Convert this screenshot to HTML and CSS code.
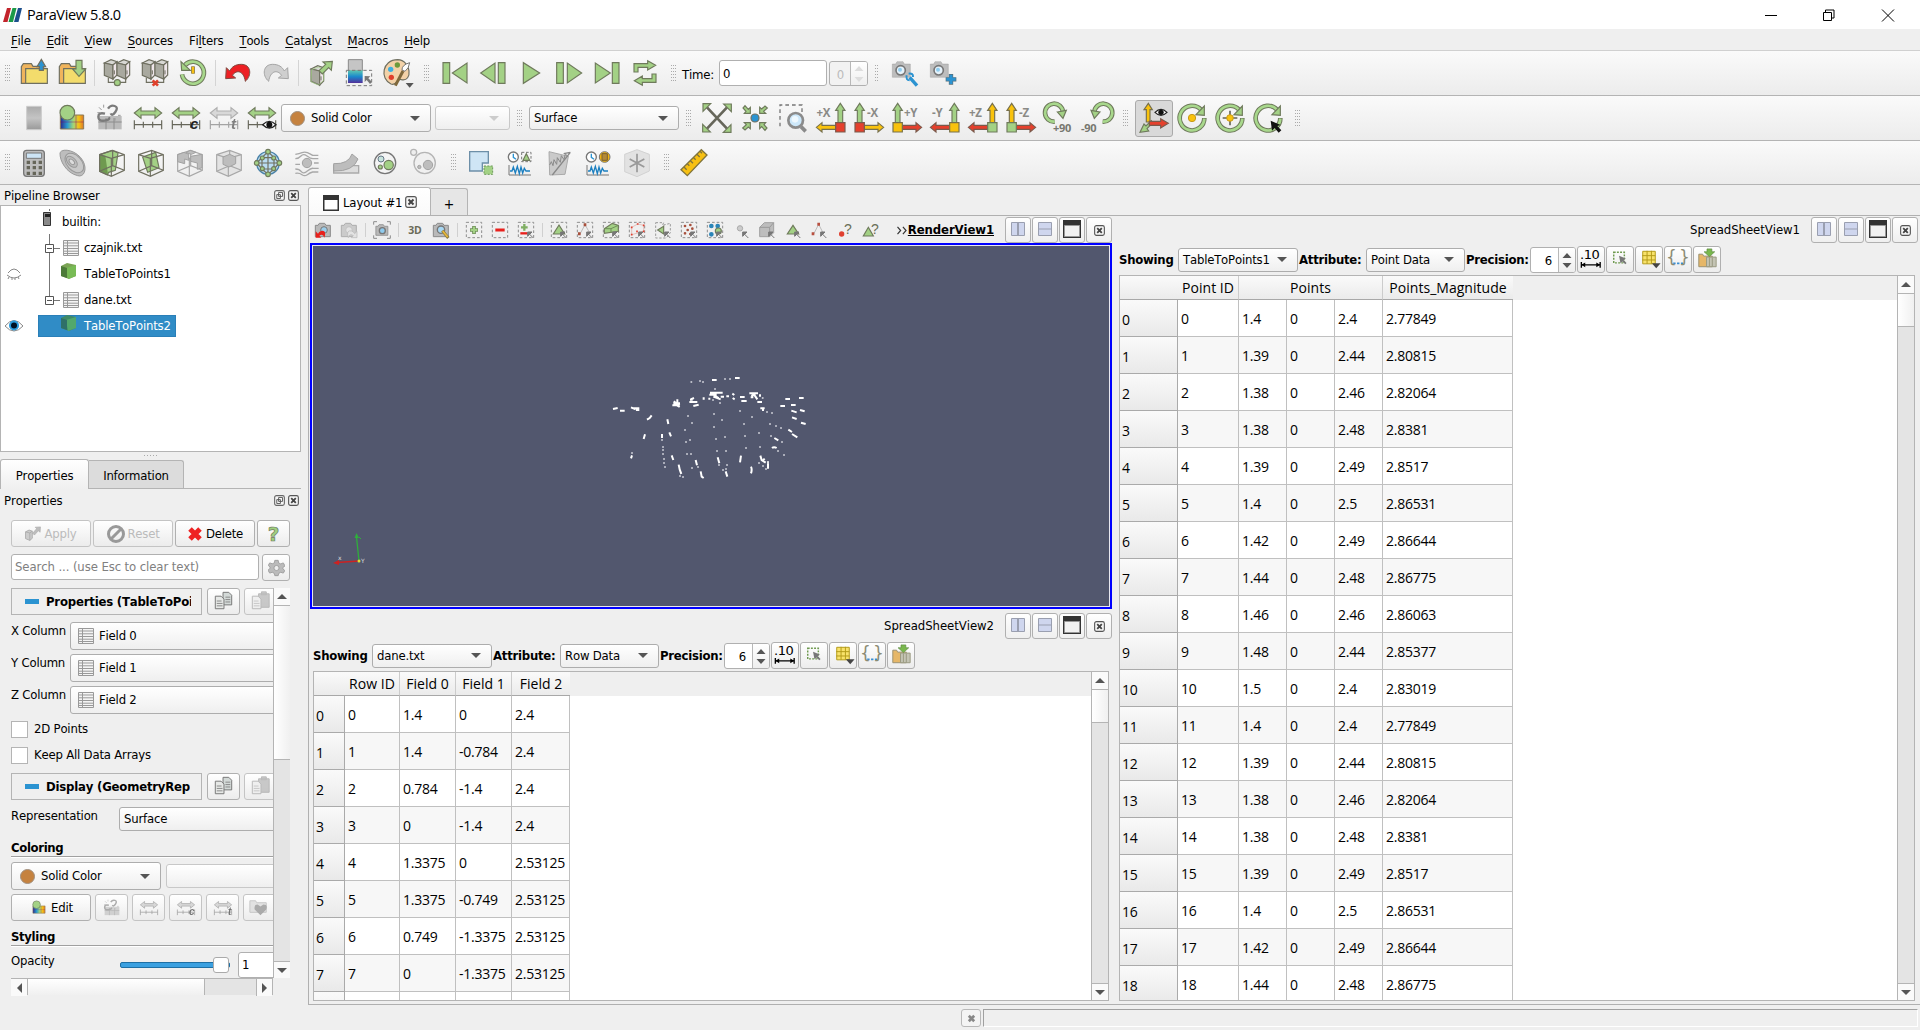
FILE: index.html
```html
<!DOCTYPE html>
<html lang="en">
<head>
<meta charset="utf-8">
<title>ParaView 5.8.0</title>
<link rel="stylesheet" href="styles.css">
</head>
<body>
<svg class="sprite" aria-hidden="true">
<defs>
<linearGradient id="rain"><stop offset="0" stop-color="#2a2a8c"/><stop offset=".3" stop-color="#2a9bd0"/><stop offset=".55" stop-color="#9fd47c"/><stop offset=".8" stop-color="#f7c012"/><stop offset="1" stop-color="#d9742a"/></linearGradient>
<linearGradient id="cool" x2="0" y2="1"><stop offset="0" stop-color="#5ec8b0"/><stop offset=".5" stop-color="#1a88cc"/><stop offset="1" stop-color="#54309a"/></linearGradient>
<linearGradient id="gray" x2="0" y2="1"><stop offset="0" stop-color="#aaa"/><stop offset=".5" stop-color="#c4c4c4"/><stop offset="1" stop-color="#999"/></linearGradient>
<g id="box"><path fill="#d8d8d4" d="M-38-30-18-40 0-34-12-24z"/><path fill="#a9a99f" d="M-38-30-12-24V18L-38 7z"/><path fill="#efe6ea" d="M-12-24 0-34V6L-12 18z"/><path d="M-8-8v12" stroke-width="3"/></g>
<g id="folder"><path fill="#f0b45c" d="M-38 31v-50l6-9h24l5 8h32v51z"/><path fill="#f3dc6c" d="M-25-13h65v44h-65z"/></g>
<polygon id="ar-up" points="0,-44 14,-23 7,-23 7,14 -7,14 -7,-23 -14,-23"/>
<polygon id="ar-l" points="-44,28 -27,14 -27,22 14,22 14,34 -27,34 -27,42"/>
<path id="sq" d="M14 14h28v28H14z"/>
<polygon id="dbl" points="-41,-15 -21,-31 -21,-21 21,-21 21,-31 41,-15 21,1 21,-9 -21,-9 -21,1"/>
<path id="rule" fill="none" stroke="#66665a" d="M-41 7v27M-14 11v18M14 11v18M41 7v27M-41 20h82"/>
<g id="cam"><path fill="#bdbdbd" stroke="#8a8a8a" d="M-38-27h10l4-7h18l4 7h18v40h-54z"/><circle cx="-13" cy="-8" r="14" fill="#e6f2fa" stroke="#777" stroke-width="5"/><circle cx="-15" cy="-10" r="6" fill="#8fcdf0" stroke="none"/></g>
<path id="eye" d="M-20 0Q0-20 20 0 0 20-20 0z" fill="#fff" stroke="#222"/>
<g id="cube"><path d="M-37-25 2-38 37-25V22L-2 40-37 25zM-37-25-2-14 37-25M-2-14V40M2-38V8M-37 25 2 8 37 22" fill="none"/></g>
<g id="dashsq"><path d="M-23-23h46v46h-46z" fill="none" stroke="#8c8c8c" stroke-width="3" stroke-dasharray="8 6"/></g>
<path id="cur" d="M22 24 8 10M5 19V6h13z" stroke="#777" stroke-width="3" fill="#777"/>
<path id="scam" d="M-23-14h8l4-6h16l4 6h13v34h-45z" fill="#b9b9b9" stroke="#8b8b8b" stroke-width="3"/>
</defs>
<symbol id="i-open" viewBox="-57 -66 114 132"><use href="#folder" class="ln"/><path class="ln" fill="#2b93d1" d="M22-41 35-19H28V-8H16V-19H9z"/></symbol>
<symbol id="i-save" viewBox="-57 -66 114 132"><use href="#folder" class="ln"/><path class="g" d="M12-38H30v26H41L21 10 2-12h10z"/></symbol>
<symbol id="i-conn" viewBox="-57 -66 114 132"><g class="ln"><use href="#box"/><use href="#box" x="38"/><path fill="none" d="M-26 15v13h52V15"/><circle class="g" cx="1" cy="29" r="9"/></g></symbol>
<symbol id="i-disc" viewBox="-57 -66 114 132"><g class="ln"><use href="#box"/><use href="#box" x="38"/><path fill="none" d="M-26 15v13h52V15"/></g><path d="M-7 22 9 38M9 22-7 38" stroke="#e0402c" stroke-width="8"/></symbol>
<symbol id="i-hist" viewBox="-57 -66 114 132"><path class="o" d="M-24-24A33 33 0 1 1-33 4"/><path class="i" d="M-24-24A33 33 0 1 1-33 4"/><path class="g" d="M-36-34-8-8-34-8z"/><path d="M0-20v22" stroke="#8c7430" stroke-width="11"/><path d="M0-18v19" stroke="#f7c012" stroke-width="6"/></symbol>
<symbol id="i-undo" viewBox="-57 -66 114 132"><path d="M-35-16-37 17-7 15-17 7C-3-12 17-6 22 25 43 7 39-26 10-26-8-26-19-18-25-6z" fill="#ed2024" stroke="#7e4a40" stroke-width="3"/></symbol>
<symbol id="i-redo" viewBox="-57 -66 114 132"><path transform="scale(-1 1)" d="M-35-16-37 17-7 15-17 7C-3-12 17-6 22 25 43 7 39-26 10-26-8-26-19-18-25-6z" fill="#cfcfcf" stroke="#a5a5a5" stroke-width="3"/></symbol>
<symbol id="i-extr" viewBox="-57 -66 114 132"><g class="ln" transform="translate(8 18)"><use href="#box"/></g><path d="M-28-10-8-18 8-12V22L-8 36-30 26z" fill="none" stroke="#a3d185" stroke-width="2"/><path class="g" d="M34-35 31-8 23-16 4 3-6-7 14-26 6-33z"/></symbol>
<symbol id="i-selc" viewBox="-57 -66 114 132"><path fill="#c5c5c5" stroke="#8a8a8a" stroke-width="3" d="M-32-40h42v34h-42z"/><path fill="url(#cool)" d="M-33-8h44v38h-44z"/><path d="M-38-8h76v46h-76z" fill="none" stroke="#777" stroke-width="3" stroke-dasharray="10 7"/><path d="M17 9v18l6-6 10 12 6-6-11-11 6-6z" fill="#777"/></symbol>
<symbol id="i-pal" viewBox="-57 -66 114 132"><path class="ln" fill="#f3d2a8" d="M2-40C-45-40-52 18-18 33 2 40-2 14 13 20 48 28 43-38 2-40z"/><circle cx="1" cy="-24" r="8" fill="#6c9a3c"/><circle cx="-19" cy="-11" r="8" fill="#3db0e0"/><circle cx="-17" cy="13" r="8" fill="#e0402c"/><path d="M38-31Q14-24 15-9L24-5Q36-14 38-31z" fill="#fff" stroke="#777" stroke-width="3"/><path d="M18-6-5 38" stroke="#80693c" stroke-width="9"/><path d="M26 30h24L38 44z" fill="#555"/></symbol>
<symbol id="i-first" viewBox="-57 -66 114 132"><path class="g" d="M-36-31h20v62h-20zM36-30v60L-8 0z"/></symbol>
<symbol id="i-prev" viewBox="-57 -66 114 132"><path class="g" d="M36-31H16v62h20zM6-30v60L-37 0z"/></symbol>
<symbol id="i-play" viewBox="-57 -66 114 132"><path class="g" d="M-23-31v62L26 0z"/></symbol>
<symbol id="i-next" viewBox="-57 -66 114 132"><path class="g" d="M-37-31h20v62h-20zM-5-30v60L38 0z"/></symbol>
<symbol id="i-last" viewBox="-57 -66 114 132"><path class="g" d="M36-31H16v62h20zM-35-30v60L10 0z"/></symbol>
<symbol id="i-loop" viewBox="-57 -66 114 132"><path class="g" id="lp" d="M-33-3v-25H8v-9l24 14L8-9v-8h-29v14z"/><use href="#lp" transform="rotate(180)"/></symbol>
<symbol id="i-camw" viewBox="-57 -66 114 132"><use href="#cam"/><path d="M14 13 36 38" stroke="#2b93d1" stroke-width="10"/><path d="M5 7q-3 14 9 15M11 2q14-2 13 10" fill="none" stroke="#2b93d1" stroke-width="6"/></symbol>
<symbol id="i-camp" viewBox="-57 -66 114 132"><use href="#cam"/><path d="M24 3v32M8 19h32" stroke="#56707c" stroke-width="13"/><path d="M24 5v28M10 19h28" stroke="#2b93d1" stroke-width="9"/></symbol>

<symbol id="i-bar" viewBox="-57 -66 114 132"><path fill="url(#gray)" stroke="#ccc" stroke-width="3" d="M-22-35h44v70h-44z"/></symbol>
<symbol id="i-cmap" viewBox="-57 -66 114 132"><path fill="url(#rain)" stroke="#8a7a55" stroke-width="3" d="M-35-9h70v42h-70z"/><path d="M-35 12h70M12-8v40" stroke="#806" stroke-opacity=".4" stroke-width="3"/><circle class="g" cx="-14" cy="-16" r="22"/></symbol>
<symbol id="i-unlk" viewBox="-57 -66 114 132"><path fill="#bbb" d="M-35-6h70v40h-70z"/><path d="M-35 12h70M-12 0v34M12 0v34" stroke="#8c8c8c" stroke-width="3"/><g fill="none" stroke="#7b7b7b" stroke-width="7"><path d="M-15-13q-20-5-20 9t18 12 14-10M-6-28q8-12 20-8t2 18-14 4"/></g><path d="M-33-32l8 8M-19-40v9M-38-16h10M15 0v8M24-8h8" stroke="#999" stroke-width="3"/></symbol>
<symbol id="i-rng" viewBox="-57 -66 114 132"><use href="#dbl" class="g"/><use href="#rule" class="ln"/></symbol>
<symbol id="i-rnge" viewBox="-57 -66 114 132"><use href="#dbl" class="g"/><use href="#rule" class="ln"/><g transform="translate(22 20)"><use href="#eye" stroke-width="4"/><circle r="9" fill="#111"/></g></symbol>
<symbol id="i-reset" viewBox="-57 -66 114 132"><path d="M-30-32 30 32M30-32-30 32" stroke="#66665a" stroke-width="8"/><g class="g"><path id="cr" d="M-42-43h23L-42-20z"/><use href="#cr" transform="rotate(90)"/><use href="#cr" transform="rotate(180)"/><use href="#cr" transform="rotate(270)"/></g></symbol>
<symbol id="i-zdat" viewBox="-57 -66 114 132"><g class="g"><path id="ci" d="M-14-14h-18l5-6-9-10 6-7 10 11 6-6z"/><use href="#ci" transform="rotate(90)"/><use href="#ci" transform="rotate(180)"/><use href="#ci" transform="rotate(270)"/></g><circle class="ln" r="12" fill="#2b93d1"/></symbol>
<symbol id="i-zbox" viewBox="-57 -66 114 132"><path d="M-39 25v-64h66v22" fill="none" stroke="#777" stroke-width="4" stroke-dasharray="11 9"/><path d="M24 26 38 40" stroke="#8a8a8a" stroke-width="11"/><circle cx="8" cy="7" r="22" fill="#cde8fa" stroke="#8b8b8b" stroke-width="8"/><circle cx="6" cy="4" r="10" fill="#eef8fe"/></symbol>
<symbol id="i-px" viewBox="-57 -66 114 132"><use href="#ar-up" x="28" class="g"/><use href="#ar-l" class="y"/><use href="#sq" class="r"/></symbol>
<symbol id="i-nx" viewBox="-57 -66 114 132"><g transform="scale(-1 1)"><use href="#ar-up" x="28" class="g"/><use href="#ar-l" class="y"/><use href="#sq" class="r"/></g></symbol>
<symbol id="i-py" viewBox="-57 -66 114 132"><g transform="scale(-1 1)"><use href="#ar-up" x="28" class="g"/><use href="#ar-l" class="r"/><use href="#sq" class="y"/></g></symbol>
<symbol id="i-ny" viewBox="-57 -66 114 132"><use href="#ar-up" x="28" class="g"/><use href="#ar-l" class="r"/><use href="#sq" class="y"/></symbol>
<symbol id="i-pz" viewBox="-57 -66 114 132"><use href="#ar-up" x="28" class="y"/><use href="#ar-l" class="r"/><use href="#sq" class="g"/></symbol>
<symbol id="i-nz" viewBox="-57 -66 114 132"><g transform="scale(-1 1)"><use href="#ar-up" x="28" class="y"/><use href="#ar-l" class="r"/><use href="#sq" class="g"/></g></symbol>
<symbol id="i-r90" viewBox="-57 -66 114 132"><g id="r90"><path class="o" d="M-13 11A27 27 0 1 1 12-18"/><path class="i" d="M-13 11A27 27 0 1 1 12-18"/><path class="g" d="M-5-18l27-5L12 1z"/></g></symbol>
<symbol id="i-l90" viewBox="-57 -66 114 132"><use href="#r90" transform="translate(4 0) scale(-1 1)"/></symbol>
<symbol id="i-oaxes" viewBox="-57 -66 114 132"><path class="g" d="M-8 8-24 24-30 18-42 43-16 39-21 32-4 15z"/><path class="y" d="M-17-44-5-25h-7V12h-11V-25h-7z"/><path class="r" d="M-14 10h34V2L43 16 20 30V22H-14z"/><g transform="translate(21 -17) scale(.9)"><use href="#eye" stroke-width="4"/><circle r="9" fill="#111"/></g></symbol>
<symbol id="i-rot" viewBox="-57 -66 114 132"><g id="rot"><path class="o" d="M27-25A37 37 0 1 0 37 0"/><path class="i" d="M27-25A37 37 0 1 0 37 2"/><path class="g" d="M12-10 37-36V-8z"/></g></symbol>
<symbol id="i-show" viewBox="-57 -66 114 132"><use href="#rot"/><circle r="11" fill="#f9c20d" stroke="#c59a1c" stroke-width="3"/></symbol>
<symbol id="i-resc" viewBox="-57 -66 114 132"><use href="#rot"/><path d="M0-22V22M-22 0H22" stroke="#66665a" stroke-width="5"/><circle r="10" fill="#f9c20d" stroke="#c59a1c" stroke-width="3"/></symbol>
<symbol id="i-pick" viewBox="-57 -66 114 132"><use href="#rot"/><path d="M8 8l4 30 8-8 12 14 8-7-12-13 10-3z" fill="#111"/></symbol>

<symbol id="i-calc" viewBox="-57 -66 114 132"><rect x="-31" y="-38" width="62" height="78" rx="9" fill="#bdbdbd" stroke="#777" stroke-width="4"/><path d="M-23-30h46v16h-46z" fill="#cde4f5" stroke="#777" stroke-width="3"/><g stroke="#66665a" stroke-width="10" stroke-dasharray="10 8"><path d="M-22-2h50M-22 14h50M-22 31h50"/></g></symbol>
<symbol id="i-cont" viewBox="-57 -66 114 132"><g fill="#bdbdbd" stroke="#999" stroke-width="3"><path d="M-39-30C-35-46 12-40 30-6 44 20 32 44 14 38-20 30-40-6-39-30z"/><ellipse rx="34" ry="22" transform="translate(4 0)rotate(48)" fill="#c9c9c9"/><ellipse cx="-5" cy="0" rx="20" ry="12" transform="rotate(45)"/><ellipse cx="-5" cy="0" rx="10" ry="6" transform="rotate(45)" fill="#ddd"/></g></symbol>
<symbol id="i-clip" viewBox="-57 -66 114 132"><path class="g" d="M-37-25 0-38 18-30 10 22-10 28-14 36-37 25z"/><path d="M-37-25-20-22-12 34-37 25z" fill="#6f9a50"/><use href="#cube" class="ln"/></symbol>
<symbol id="i-slic" viewBox="-57 -66 114 132"><path class="g" d="M-25-18 14-32 24 14-10 28z"/><use href="#cube" class="ln"/></symbol>
<symbol id="i-thr" viewBox="-57 -66 114 132"><use href="#cube" class="lg"/><path class="gf" d="M-37-25-18-32-4-26-4-8-16-12-16 2-37-4zM2-20l34-6v40l-14 5V0L2-5zM0-38l18 6-14 6-16-5z"/></symbol>
<symbol id="i-sub" viewBox="-57 -66 114 132"><path d="M-37-25 2-38 37-25V22L-2 40-37 25z" fill="#e3e3e3"/><use href="#cube" class="lg"/><path class="gf" d="M-18-18 2-26 20-18V2L0 12-18 4z"/></symbol>
<symbol id="i-glyph" viewBox="-57 -66 114 132"><circle r="34" fill="#b9dcf2" stroke="#4a82a8" stroke-width="4"/><path class="ln" fill="none" d="M-34 0H34M0-34V34M-18-16H18V18H-18zM-34 0-18-16 0-34 18-16 34 0 18 18 0 34-18 18z"/><g class="g"><circle cy="-34" r="7"/><circle cy="34" r="7"/><circle cx="-34" r="7"/><circle cx="34" r="7"/><circle cx="-17" cy="-15" r="6"/><circle cx="17" cy="-15" r="6"/><circle cx="-17" cy="17" r="6"/><circle cx="17" cy="17" r="6"/></g></symbol>
<symbol id="i-strm" viewBox="-57 -66 114 132"><g fill="none" stroke="#a8a8a8" stroke-width="4"><path d="M-35-26q12-2 20-5t16 0 16 8h17M-35-13q10 0 17-8t18 0 18 8h16M-35 4h14M21 0h14M-35 18q12 0 18 8t18-2 18-8h16M-35 31q12-2 20 4t16 0 16-8h17"/></g><circle class="gf" r="14"/></symbol>
<symbol id="i-warp" viewBox="-57 -66 114 132"><path d="M-37 8h75v22h-75z" fill="#ddd" stroke="#aaa" stroke-width="4"/><path class="gf" d="M-37 2Q8 4 18-27L36-12Q22 26-37 24z"/></symbol>
<symbol id="i-grp" viewBox="-57 -66 114 132"><circle r="32" fill="#f4f4f4" stroke="#777" stroke-width="4"/><circle class="g" cx="11" cy="6" r="14"/><circle cx="-12" cy="-12" r="9" fill="#c8e4dc" stroke="#678"  stroke-width="3"/><circle class="g" cx="-14" cy="12" r="6"/></symbol>
<symbol id="i-xtr" viewBox="-57 -66 114 132"><circle cx="2" r="32" fill="#f0f0f0" stroke="#b5b5b5" stroke-width="4"/><circle class="gf" cx="12" cy="6" r="14"/><circle class="gf" cx="-14" cy="12" r="5"/><circle cx="-31" cy="-32" r="9" fill="#eee" stroke="#b5b5b5" stroke-width="4"/></symbol>
<symbol id="i-exsel" viewBox="-57 -66 114 132"><path d="M-34-34h56v34H4v24h-38z" fill="#cfe5f5" stroke="#6d8fa8" stroke-width="4"/><path d="M9 9h26v25H9z" fill="#a3d185" stroke="#6c9a5a" stroke-width="3" stroke-dasharray="6 4"/></symbol>
<symbol id="i-ptime" viewBox="-57 -66 114 132"><circle cx="-20" cy="-18" r="15" fill="#fff" stroke="#777" stroke-width="4"/><path d="M-20-28v11l8 6" fill="none" stroke="#2b93d1" stroke-width="4"/><path d="M5-32h28v28H5z" fill="none" stroke="#777" stroke-width="3" stroke-dasharray="8 5"/><path class="g" d="M19-28 29-8H9z"/><path id="wave" d="M-33 6v30h66" fill="none" stroke="#777" stroke-width="3"/><path id="wv" d="M-30 24h6l4-12 6 18 6-20 6 22 5-20 5 18 5-14 5 8h12" fill="none" stroke="#1b7fc0" stroke-width="4"/></symbol>
<symbol id="i-line" viewBox="-57 -66 114 132"><path d="M-30-34 28-20 18 34-28 36z" fill="#cacaca" stroke="#aaa" stroke-width="3"/><path d="M-20 36 34-32M34-32 14-28" stroke="#888" stroke-width="4"/><path d="M-28 6l5-10 5 12 3-18 8 14 2-20 9 14 3-20 8 12 4-18 8 10" fill="none" stroke="#8a8a8a" stroke-width="3"/></symbol>
<symbol id="i-gtime" viewBox="-57 -66 114 132"><circle cx="-20" cy="-18" r="15" fill="#fff" stroke="#777" stroke-width="4"/><path d="M-20-28v11l8 6" fill="none" stroke="#2b93d1" stroke-width="4"/><circle cx="20" cy="-18" r="16" fill="#f2b40e" stroke="#777" stroke-width="3"/><path d="M12-28h16v20H12z" fill="#b28a3a" stroke="#7a6030" stroke-width="3"/><use href="#wave"/><use href="#wv"/></symbol>
<symbol id="i-prog" viewBox="-57 -66 114 132"><path d="M-37-26 0-40 37-26V24L0 41-37 26z" fill="#e2e2e2" stroke="#d2d2d2" stroke-width="3"/><path d="M0-28V28M-22-12 22 12M22-12-22 12" stroke="#999" stroke-width="5"/></symbol>
<symbol id="i-ruler" viewBox="-57 -66 114 132"><path d="M-39 20 22-40 39-24-20 38z" fill="#f7c012" stroke="#80743c" stroke-width="4"/><path d="M-30 12l8 8M-20 2l6 6M-11-7l8 8M-1-16l6 6M9-26l8 8M18-35l6 6" stroke="#80743c" stroke-width="4"/></symbol>

<symbol id="v-undo" viewBox="-39 -39 78 78"><use href="#scam"/><circle cx="3" cy="0" r="10" fill="#9bcdea" stroke="#777" stroke-width="3"/><path d="M-22 4v19h17l-6-6q11-8 15 6 8-24-10-20-6 2-9 8z" fill="#e8201c"/></symbol>
<symbol id="v-redo" viewBox="-39 -39 78 78"><g opacity=".65"><use href="#scam"/><circle r="10" fill="#ddd" stroke="#aaa" stroke-width="3"/><path d="M24 4v19H7l6-6Q2 9-2 23-10-1 8 3q6 2 9 8z" fill="#ddd" stroke="#999" stroke-width="2"/></g></symbol>
<symbol id="v-shot" viewBox="-39 -39 78 78"><use href="#scam" transform="scale(.8)"/><circle cx="1" cy="2" r="9" fill="#8fcbee" stroke="#777" stroke-width="4"/><path d="M-25-16v-9h10M15-25h10v9M25 16v9H15M-15 25h-10v-9" fill="none" stroke="#8c8c8c" stroke-width="3"/></symbol>
<symbol id="v-cam" viewBox="-39 -39 78 78"><use href="#scam"/><circle r="11" cy="-1" fill="#a8d8f4" stroke="#777" stroke-width="4"/><path d="M4 2 22 24" stroke="#8a7a3c" stroke-width="9"/><path d="M5 3 20 21" stroke="#e9b83a" stroke-width="5"/></symbol>
<symbol id="v-add" viewBox="-39 -39 78 78"><use href="#dashsq"/><path d="M0-12V12M-12 0H12" stroke="#6f8f58" stroke-width="11"/><path d="M0-10V10M-10 0H10" stroke="#a3d185" stroke-width="6"/></symbol>
<symbol id="v-sub" viewBox="-39 -39 78 78"><use href="#dashsq"/><path d="M-14 0H14" stroke="#e8201c" stroke-width="9"/></symbol>
<symbol id="v-tog" viewBox="-39 -39 78 78"><use href="#dashsq"/><path d="M-5-18V2M-15-8H5" stroke="#7fae62" stroke-width="7"/><path d="M-17 10H7" stroke="#e8201c" stroke-width="7"/><use href="#cur"/></symbol>
<symbol id="v-tri" viewBox="-39 -39 78 78"><use href="#dashsq"/><path class="g" d="M0-15 17 12H-17z"/><use href="#cur"/></symbol>
<symbol id="v-pts" viewBox="-39 -39 78 78"><use href="#dashsq"/><path d="M0-16-15 12M0-16 16 12" stroke="#bbb" stroke-width="3"/><path d="M0-20v9M-17 7v9" stroke="#a8503c" stroke-width="8"/><use href="#cur"/></symbol>
<symbol id="v-fru" viewBox="-39 -39 78 78"><use href="#dashsq"/><path class="g" d="M-20-4 4-20 22-14V4L-20 10z"/><path d="M-20-4 0-4 22-14M0-4V8" fill="none" stroke="#6f8f58" stroke-width="3"/><use href="#cur"/></symbol>
<symbol id="v-frp" viewBox="-39 -39 78 78"><use href="#dashsq"/><path d="M-16-8 2-18 20-14V4L-16 14z" fill="none" stroke="#e0a8a0" stroke-width="2"/><path d="M-16-8h.1M2-18h.1M20-14h.1M20 4h.1M-16 14h.1M0 4h.1" stroke="#e04030" stroke-width="5" stroke-linecap="square"/><use href="#cur"/></symbol>
<symbol id="v-poly" viewBox="-39 -39 78 78"><path d="M-22-22h24l-4 8 24-6v28l-12 16h-32z" fill="none" stroke="#999" stroke-width="3" stroke-dasharray="7 5"/><path class="g" d="M-16 0 2-11V12z"/><use href="#cur"/></symbol>
<symbol id="v-ppt" viewBox="-39 -39 78 78"><use href="#dashsq"/><path d="M-12-12h.1M4-15h.1M-4 0h.1M10-4h.1M-12 10h.1M4 12h.1" stroke="#a8503c" stroke-width="8" stroke-linecap="round"/><use href="#cur"/></symbol>
<symbol id="v-blk" viewBox="-39 -39 78 78"><use href="#dashsq"/><path d="M-11-12h.1M-11 13h.1M8-12h.1" stroke="#2a85b8" stroke-width="14" stroke-linecap="round"/><circle class="g" cx="10" cy="3" r="9"/><use href="#cur"/></symbol>
<symbol id="v-ipt" viewBox="-39 -39 78 78"><circle cx="-3" cy="-5" r="8" fill="#ccc" stroke="#aaa" stroke-width="3"/><use href="#cur"/></symbol>
<symbol id="v-icb" viewBox="-39 -39 78 78"><path class="gf" d="M-22-8-8-22H20V8L8 20H-22z"/><path d="M-22-8H8V20M8-8 20-22" fill="none" stroke="#999" stroke-width="3"/><use href="#cur"/></symbol>
<symbol id="v-itr" viewBox="-39 -39 78 78"><path class="g" d="M0-14 17 12H-17z"/><use href="#cur"/></symbol>
<symbol id="v-ivt" viewBox="-39 -39 78 78"><path d="M-1-17-16 12M-1-17 14 12" stroke="#bbb" stroke-width="3"/><path d="M-1-22v9M-18 7v9" stroke="#b85040" stroke-width="8"/><use href="#cur"/></symbol>
<symbol id="v-qpt" viewBox="-39 -39 78 78"><circle cx="-10" cy="12" r="8" fill="#e04030"/></symbol>
<symbol id="v-qtr" viewBox="-39 -39 78 78"><path class="g" d="M-8-8 7 18H-23z"/></symbol>

<symbol id="s-h" viewBox="0 0 26 26"><path d="M6.500 5.500h13v13h-13zM12.500 5v14M13.500 5v14" fill="#cfd6ee" stroke="#9a9fb0"/></symbol>
<symbol id="s-v" viewBox="0 0 26 26"><path d="M6.500 5.500h13v13h-13zM6 12h14" fill="#cfd6ee" stroke="#9a9fb0"/></symbol>
<symbol id="s-max" viewBox="0 0 26 26"><path d="M4 3h18v18H4z" fill="#333"/><path d="M5.500 8.500h15v11h-15z" fill="#f2f2f2" stroke="#999"/></symbol>
<symbol id="s-x" viewBox="0 0 12 12"><rect x=".7" y=".7" width="10.600" height="10.600" rx="2" fill="#f5f5f5" stroke="#555" stroke-width="1.200"/><path d="M3.500 3.500l5 5M8.500 3.500l-5 5" stroke="#444" stroke-width="2"/></symbol>
<symbol id="s-fl" viewBox="0 0 12 12"><rect x=".7" y=".7" width="10.600" height="10.600" rx="2" fill="#f5f5f5" stroke="#666" stroke-width="1.200"/><path d="M5 2.700h4.300V7H5zM3 5h4v4.300H3z" fill="none" stroke="#555"/></symbol>
<symbol id="s-grid" viewBox="0 0 16 16"><path d="M.5.5h15v15H.5z" fill="#f4f4f4" stroke="#999"/><path d="M1 3h14M1 5.800h14M1 8.500h14M1 11.200h14M1 13.500h14M4.500 1v14" stroke="#999"/></symbol>
<symbol id="s-cube" viewBox="0 0 16 16"><path d="M0 3 6 0l9 2v11l-7 3-8-3z" fill="#7ba455"/><path d="M5 5l10-3v11l-8 3z" fill="#78bb55"/><path d="M0 3l6 2v10l-6-2z" fill="#4c7a38"/></symbol>
<symbol id="s-cube2" viewBox="0 0 16 16"><path d="M0 3 6 0l9 2v11l-7 3-8-3z" fill="#3f8a68"/><path d="M5 5l10-3v11l-8 3z" fill="#52a86c"/><path d="M0 3l6 2v10l-6-2z" fill="#2f7068"/></symbol>
<symbol id="s-dec" viewBox="0 0 28 28"><path d="M4 16.500v6M23.500 16.500v6M4 19.500h20" stroke="#000" stroke-width="1.400"/><path d="M4 19.500l4-2.500v5zM23.500 19.500l-4-2.500v5z"/></symbol>
<symbol id="s-sel" viewBox="0 0 28 28"><path d="M7.500 6.500h11v11h-11z" fill="none" stroke="#6f9a50" stroke-width="1.500" stroke-dasharray="2 1.300"/><path d="M13 10l1.500 8 2-2 3 3 1.300-1.300-3-3 2.200-1.700z" fill="#777"/></symbol>
<symbol id="s-col" viewBox="0 0 28 28"><path d="M7.500 5.500h13v13h-13zM7 10h13.500M7 14.500h13.500M12 5v13.500M16.500 5v13.500" fill="#f8e26a" stroke="#b39a18"/><path d="M17 18h9l-4.500 5z" fill="#444"/></symbol>
<symbol id="s-br" viewBox="0 0 28 28"><path d="M9 18h11" stroke="#3b8fd0" stroke-width="2" stroke-dasharray="2.500 1.500"/></symbol>
<symbol id="s-exp" viewBox="0 0 28 28"><path d="M5.500 8.500h4l1 2h9v11h-14z" fill="#e6b768" stroke="#999070"/><path d="M13.500 11.500h10v10h-10zM16.500 12v9M19.500 12v9" fill="#c4c4b4" stroke="#999980"/><path d="M14 3h5v3h3l-5.500 5L11 6h3z" fill="#79b84d" stroke="#5d8b40" stroke-width=".7"/></symbol>
<symbol id="s-copy" viewBox="0 0 32 28"><path d="M15.500 4.500h6l3 3v10h-9z" fill="#d3d9d7" stroke="#777"/><path d="M7.500 8.500h6l3 3v10h-9z" fill="#e6e8e6" stroke="#777"/><path d="M9 13.500h5M9 16h6M9 18.500h6M18 9.500h5M18 12h5M18 14.500h5" stroke="#888"/></symbol>
<symbol id="s-paste" viewBox="0 0 32 28"><path d="M14 6h11v14H14zM17 4h5v3h-5z" fill="#bdbdbd" stroke="#aaa"/><path d="M7.500 8.500h6l3 3v10h-9z" fill="#eee" stroke="#aaa"/><path d="M9 13.500h5M9 16h6M9 18.500h6" stroke="#bbb"/></symbol>
</svg>

<header class="titlebar">
  <svg class="logo" viewBox="0 0 19 14"><path d="M4 0h4L4.500 14H0z" fill="#c2242c"/><path d="M9.500 0h4L10 14H5.500z" fill="#1c9a48"/><path d="M15 0h4l-3.500 14H11z" fill="#1c4f8c"/></svg>
  <span class="apptitle">ParaView 5.8.0</span>
  <svg class="winctl" viewBox="0 0 150 28" fill="none" stroke="#000"><path d="M6 14.500h12M64.500 11.500h8v8h-8zM66.500 11v-2h8.500v8h-2M123 8.500l12 12M135 8.500l-12 12"/></svg>
</header>
<nav class="menu"><span><u>F</u>ile</span><span><u>E</u>dit</span><span><u>V</u>iew</span><span><u>S</u>ources</span><span>Fi<u>l</u>ters</span><span><u>T</u>ools</span><span><u>C</u>atalyst</span><span><u>M</u>acros</span><span><u>H</u>elp</span></nav>

<div class="toolbar">
  <i class="grip"></i><svg class="ic"><use href="#i-open"/></svg><svg class="ic"><use href="#i-save"/></svg><i class="sep"></i><svg class="ic"><use href="#i-conn"/></svg><svg class="ic"><use href="#i-disc"/></svg><svg class="ic"><use href="#i-hist"/></svg><i class="sep"></i><svg class="ic"><use href="#i-undo"/></svg><svg class="ic"><use href="#i-redo"/></svg><i class="sep"></i><svg class="ic"><use href="#i-extr"/></svg><svg class="ic"><use href="#i-selc"/></svg><svg class="ic"><use href="#i-pal"/></svg>
  <i class="grip gw20"></i><svg class="ic"><use href="#i-first"/></svg><svg class="ic"><use href="#i-prev"/></svg><svg class="ic"><use href="#i-play"/></svg><svg class="ic"><use href="#i-next"/></svg><svg class="ic"><use href="#i-last"/></svg><svg class="ic"><use href="#i-loop"/></svg>
  <i class="grip gw18"></i><label class="time">Time:</label><div class="field timefield">0</div><div class="spin off"><b>0</b><svg viewBox="0 0 15 24"><path d="M3 9h9L7.500 4zM3 15h9l-4.500 5z"/></svg></div>
  <i class="grip gw19"></i><svg class="ic"><use href="#i-camw"/></svg><svg class="ic"><use href="#i-camp"/></svg>
</div>
<div class="toolbar">
  <i class="grip"></i><svg class="ic"><use href="#i-bar"/></svg><svg class="ic"><use href="#i-cmap"/></svg><svg class="ic"><use href="#i-unlk"/></svg><svg class="ic"><use href="#i-rng"/></svg><svg class="ic"><use href="#i-rng"/><text class="let" x="23" y="33">c</text></svg><svg class="ic dis"><use href="#i-rng"/><text class="let" x="26" y="33">t</text></svg><svg class="ic"><use href="#i-rnge"/></svg>
  <div class="combo solid"><i class="dot"></i>Solid Color<i class="tri"></i></div><div class="combo blank"><i class="tri"></i></div>
  <i class="grip gw19b"></i><div class="combo surf">Surface<i class="tri"></i></div>
  <i class="grip gw19c"></i><svg class="ic"><use href="#i-reset"/></svg><svg class="ic"><use href="#i-zdat"/></svg><svg class="ic"><use href="#i-zbox"/></svg><svg class="ic"><use href="#i-px"/><text class="ax" x="4.500" y="21">+X</text></svg><svg class="ic"><use href="#i-nx"/><text class="ax" x="17" y="21">-X</text></svg><svg class="ic"><use href="#i-py"/><text class="ax" x="16" y="21">+Y</text></svg><svg class="ic"><use href="#i-ny"/><text class="ax" x="6" y="21">-Y</text></svg><svg class="ic"><use href="#i-pz"/><text class="ax" x="5" y="21">+Z</text></svg><svg class="ic"><use href="#i-nz"/><text class="ax" x="17" y="21">-Z</text></svg><svg class="ic"><use href="#i-r90"/><text class="ax sm" x="13" y="36">+90</text></svg><svg class="ic"><use href="#i-l90"/><text class="ax sm" x="3" y="36">-90</text></svg>
  <i class="grip gw19c"></i><span class="pressed"><svg class="ic"><use href="#i-oaxes"/></svg></span><svg class="ic"><use href="#i-show"/></svg><svg class="ic"><use href="#i-resc"/></svg><svg class="ic"><use href="#i-pick"/></svg><i class="grip gw20"></i>
</div>
<div class="toolbar wide">
  <i class="grip"></i><svg class="ic"><use href="#i-calc"/></svg><svg class="ic"><use href="#i-cont"/></svg><svg class="ic"><use href="#i-clip"/></svg><svg class="ic"><use href="#i-slic"/></svg><svg class="ic"><use href="#i-thr"/></svg><svg class="ic"><use href="#i-sub"/></svg><svg class="ic"><use href="#i-glyph"/></svg><svg class="ic"><use href="#i-strm"/></svg><svg class="ic"><use href="#i-warp"/></svg><svg class="ic"><use href="#i-grp"/></svg><svg class="ic"><use href="#i-xtr"/></svg>
  <i class="grip gw18"></i><svg class="ic"><use href="#i-exsel"/></svg><svg class="ic"><use href="#i-ptime"/></svg><svg class="ic"><use href="#i-line"/></svg><svg class="ic"><use href="#i-gtime"/></svg><svg class="ic"><use href="#i-prog"/></svg><i class="grip gw18"></i><svg class="ic"><use href="#i-ruler"/></svg>
</div>

<main class="work">
<aside class="dock">
  <div class="dtitle">Pipeline Browser<span><svg><use href="#s-fl"/></svg><svg><use href="#s-x"/></svg></span></div>
  <div class="tree">
    <div class="trow"><svg class="guide" viewBox="0 0 62 26"><path d="M49.500 0v2M49.500 25v1" stroke="#777"/><path d="M43.500 3.500h7v13h-7z" fill="#8a8a8a" stroke="#333"/><path d="M45 5h5v3h-5z" fill="#222"/></svg>builtin:</div>
    <div class="trow"><svg class="guide" viewBox="0 0 62 26"><path d="M49.500 0v9M49.500 17v9M53 13.500h7" stroke="#777"/><path d="M45.500 9.500h8v8h-8zM47 13.500h5" fill="#fff" stroke="#555"/></svg><svg class="gi"><use href="#s-grid"/></svg>czajnik.txt</div>
    <div class="trow"><svg class="guide" viewBox="0 0 62 26"><path d="M49.500 0v26" stroke="#777"/><path d="M8 12q6-8 12 0M7 14q7 6 14 0M9 16l-1 2M12 17v2M15 17v2M18 16l1 2" fill="none" stroke="#888"/></svg><svg class="gi cu"><use href="#s-cube"/></svg>TableToPoints1</div>
    <div class="trow"><svg class="guide" viewBox="0 0 62 26"><path d="M49.500 0v9M53 13.500h7" stroke="#777"/><path d="M45.500 9.500h8v8h-8zM47 13.500h5" fill="#fff" stroke="#555"/></svg><svg class="gi"><use href="#s-grid"/></svg>dane.txt</div>
    <div class="trow"><svg class="guide eye" viewBox="0 0 38 26"><path d="M5 13q9-11 18 0-9 10-18 0z" fill="#fff" stroke="#888"/><circle cx="14" cy="12.500" r="5" fill="#2b9bdc"/><circle cx="14" cy="12.500" r="3" fill="#012"/></svg><span class="selected"><svg class="gi cu"><use href="#s-cube2"/></svg>TableToPoints2</span></div>
  </div>
  <div class="split"></div>
  <div class="tabs"><span class="tab on">Properties</span><span class="tab">Information</span></div>
  <div class="dtitle p2">Properties<span><svg><use href="#s-fl"/></svg><svg><use href="#s-x"/></svg></span></div>
  <div class="btnrow">
    <div class="btn w79 off"><svg viewBox="-45 -45 90 90" class="bi"><path d="M-42-12-22-22-4-16V24L-18 36-42 26z" fill="#ccc" stroke="#aaa" stroke-width="5"/><path d="M-42-12-18-6-4-16M-18-6V36" fill="none" stroke="#aaa" stroke-width="5"/><path class="gf" d="M42-40 40-10 30-18 8 6-2-4 20-30 12-38z"/></svg>Apply</div>
    <div class="btn w79 off"><svg viewBox="0 0 20 20" class="bi2"><circle cx="10" cy="10" r="7.500" fill="none" stroke="#999" stroke-width="3"/><path d="M5 15 15 5" stroke="#999" stroke-width="3"/></svg>Reset</div>
    <div class="btn w79"><svg viewBox="0 0 16 16" class="bi3"><path d="M3 3l10 10M13 3 3 13" stroke="#ee2222" stroke-width="5"/></svg>Delete</div>
    <div class="btn w32"><span class="help">?</span></div>
  </div>
  <div class="btnrow s"><div class="field search">Search ... (use Esc to clear text)</div><div class="btn gear"><svg viewBox="0 0 20 20"><path d="M8 1h4l.5 3 2.500 1.200L18 4l2 3.500-2.500 2v1.500l2.300 2L18 16l-3-1-2.500 1.500L12 19H8l-.5-2.500L5 15l-3 1-2-3.500 2.400-2v-1.500L.3 7 2 4l3 1 2.500-1z" fill="#bbb" stroke="#999"/><circle cx="10" cy="10" r="3" fill="#eee" stroke="#999"/></svg></div></div>
  <div class="scroller">
    <div class="inner">
      <div class="sect"><div class="shead"><span>Properties (TableToPoints2)</span></div><div class="btn cp"><svg><use href="#s-copy"/></svg></div><div class="btn cp off"><svg><use href="#s-paste"/></svg></div></div>
      <div class="prow"><label>X Column</label><div class="pcombo"><svg><use href="#s-grid"/></svg>Field 0</div></div>
      <div class="prow"><label>Y Column</label><div class="pcombo"><svg><use href="#s-grid"/></svg>Field 1</div></div>
      <div class="prow"><label>Z Column</label><div class="pcombo"><svg><use href="#s-grid"/></svg>Field 2</div></div>
      <div class="check"><i></i>2D Points</div>
      <div class="check c2"><i></i>Keep All Data Arrays</div>
      <div class="sect s2"><div class="shead"><span>Display (GeometryRep</span></div><div class="btn cp"><svg><use href="#s-copy"/></svg></div><div class="btn cp off"><svg><use href="#s-paste"/></svg></div></div>
      <div class="rep"><label>Representation</label><div class="pcombo">Surface</div></div>
      <div class="sub">Coloring</div>
      <div class="colrow"><div class="combo solid"><i class="dot"></i>Solid Color<i class="tri"></i></div><div class="combo rest"></div></div>
      <div class="editrow"><div class="btn w79"><svg class="ei"><use href="#i-cmap"/></svg>Edit</div><div class="btn cp off"><svg class="ei"><use href="#i-unlk"/></svg></div><div class="btn cp off"><svg class="ei"><use href="#i-rng"/></svg></div><div class="btn cp off"><svg class="ei"><use href="#i-rng"/><text class="let tiny" x="15" y="21">c</text></svg></div><div class="btn cp off"><svg class="ei"><use href="#i-rng"/><text class="let tiny" x="17" y="21">t</text></svg></div><div class="btn cp off"><svg viewBox="0 0 32 28"><path d="M6 7h6l1 2h10v10H6z" fill="#ddd" stroke="#bbb"/><path d="M17 22l-6-6q-1-5 3-5l3 2 3-2q5 0 3 5z" fill="#999"/></svg></div></div>
      <div class="sub">Styling</div>
      <div class="opac"><label>Opacity</label><div class="slider"><i></i></div><div class="field">1</div></div>
    </div>
    <div class="vs"><b class="au"></b><i class="thumb"></i><i class="fill"></i><b class="ad"></b></div>
    <div class="hs"><b class="al"></b><i class="thumb"></i><i class="fill"></i><b class="arr"></b></div>
  </div>
</aside>
<div class="gutter"></div>
<section class="center">
  <div class="ltabs"><div class="ltab on"><svg class="li" viewBox="0 0 16 16"><path d="M0 0h16v16H0z" fill="#333"/><path d="M1.500 5h13v9.500h-13z" fill="#fff"/></svg>Layout #1<svg class="lx"><use href="#s-x"/></svg></div><div class="ltab plus">+</div></div>
  <div class="pane">
    <div class="col">
      <div class="vhead">
        <div class="vtools"><svg><use href="#v-undo"/></svg><svg><use href="#v-redo"/></svg><i></i><svg><use href="#v-shot"/></svg><i></i><svg><text x="6.300" y="16.700" class="td">3D</text></svg><svg><use href="#v-cam"/></svg><i></i><svg><use href="#v-add"/></svg><svg><use href="#v-sub"/></svg><svg><use href="#v-tog"/></svg><i></i><svg><use href="#v-tri"/></svg><svg><use href="#v-pts"/></svg><svg><use href="#v-fru"/></svg><svg><use href="#v-frp"/></svg><svg><use href="#v-poly"/></svg><svg><use href="#v-ppt"/></svg><svg><use href="#v-blk"/></svg><svg><use href="#v-ipt"/></svg><svg><use href="#v-icb"/></svg><svg><use href="#v-itr"/></svg><svg><use href="#v-ivt"/></svg><svg><use href="#v-qpt"/><text class="q" x="12" y="17">?</text></svg><svg><use href="#v-qtr"/><text class="q" x="13" y="17">?</text></svg></div>
        <svg class="more" viewBox="0 0 12 10"><path d="M1 1l3.500 4L1 9M7 1l3.500 4L7 9" fill="none" stroke="#333" stroke-width="1.300"/></svg>
        <span class="vname act">RenderView1</span>
        <div class="vbtns"><div><svg><use href="#s-h"/></svg></div><div><svg><use href="#s-v"/></svg></div><div><svg><use href="#s-max"/></svg></div><div><svg class="cx"><use href="#s-x"/></svg></div></div>
      </div>
      <div class="render">
        <svg viewBox="313 246 796 360">
          <g transform="translate(580 360) scale(.33333)" stroke="#fff" fill="none" stroke-width="6">
            <path d="M396 60h14M465 54h14M99 147l14-3M120 152h14M153 142l14 6M160 145h18M168 150h10M201 179l8-5 6-8M262 178l3 14M195 223l-4 14M246 222v12M268 217l5 12M275 286l5 14M156 286l-3 9M347 300l4 16M362 334l3 16 6 4M413 292l5 18M437 334l5 16M483 287l-3 20M513 320q4 8 0 20M296 314q2 14 8 28M576 264q6-5 14 0M583 234l12 7M625 209l11 7M636 222l16 10M636 172l14 5M663 188l14 4M660 150l14 4M634 152l16 5M633 135h14M601 138h14M616 117h14M657 114h14"/>
            <path d="M277 136h14l8 5M281 124l18 13M292 118v20M280 130h20M328 126h24M340 138l16-4M332 118l10-4M330 119h8M371 112v7M388 113v6M388 104h12l16 10M390 98h38M400 110l22 8M396 104h14M422 110h10M439 109h8M457 101l6 4M458 114l6 4M480 111h14M484 123h16M508 100h26M514 108l12-6M512 112h8M524 106l8 12M540 103v7M532 126h14M541 145h13M546 150h6M541 287l4 13 12 8M546 304l8-8M564 304v22"/>
            <path stroke-linecap="square" stroke="#dcdee4" stroke-width="5" d="M334 66h.1M360 63h.1M369 66h.1M435 57h.1M450 57h.1M405 87h.1M399 120h.1M420 129h.1M548 114h.1M480 153h.1M324 168h.1M402 162h.1M516 171h.1M426 180h.1M336 189h.1M492 192h.1M402 201h.1M315 210h.1M537 219h.1M495 228h.1M435 231h.1M408 237h.1M330 240h.1M318 246h.1M561 156h.1M576 159h.1M570 192h.1M588 198h.1M603 204h.1M573 228h.1M606 246h.1M540 261h.1M498 264h.1M438 273h.1M411 273h.1M594 273h.1M612 285h.1M321 282h.1M333 282h.1M246 240h.1M249 261h.1M249 270h.1M249 282h.1M252 297h.1M252 309h.1M255 321h.1M156 279h.1M300 348h.1M309 351h.1M336 324h.1M354 321h.1M417 315h.1M441 315h.1M429 330h.1M438 327h.1M537 309h.1M549 318h.1M558 327h.1M564 309h.1"/>
          </g>
          <path d="M359 561l-2.500-24" stroke="#2fae3c" stroke-width="1.300"/><path d="M354.500 538l2-5 2.500 5z" fill="#2fae3c"/><path d="M359 561l-22 1.500" stroke="#c22" stroke-width="1.300"/><path d="M333 563l6-3v5z" fill="#c22"/><circle cx="359" cy="561" r="1.500" fill="#dd3"/><g class="axl"><text x="361" y="563">Y</text><text x="338" y="560">x</text></g><path d="M359 537l2 2" stroke="#2fae3c"/>
        </svg>
      </div>
      <div class="vhead h2"><span class="vname">SpreadSheetView2</span>
        <div class="vbtns"><div><svg><use href="#s-h"/></svg></div><div><svg><use href="#s-v"/></svg></div><div><svg><use href="#s-max"/></svg></div><div><svg class="cx"><use href="#s-x"/></svg></div></div></div>
      <div class="sbar"><b class="l1">Showing</b><div class="combo c120">dane.txt<i class="tri"></i></div><b class="l2">Attribute:</b><div class="combo c99">Row Data<i class="tri"></i></div><b class="l3">Precision:</b><div class="spin"><b>6</b><svg viewBox="0 0 15 24"><path d="M3 10h9L7.500 5zM3 15h9l-4.500 5z"/></svg></div><div class="sb"><svg><use href="#s-dec"/><text x="3" y="13" class="dec">.10</text></svg></div><div class="sb"><svg><use href="#s-sel"/></svg></div><div class="sb"><svg><use href="#s-col"/></svg></div><div class="sb"><svg><use href="#s-br"/><text x="2" y="17" class="br">{</text><text x="15" y="17" class="br">}</text></svg></div><div class="sb"><svg><use href="#s-exp"/></svg></div></div>
      <div class="sheet">
        <div class="clip"><table class="t2"><colgroup><col class="k31"><col class="k55"><col class="k56"><col class="k56"><col class="k58"></colgroup>
        <thead><tr><th class="nb"></th><th>Row ID</th><th>Field 0</th><th>Field 1</th><th class="nb">Field 2</th></tr></thead>
        <tbody>
        <tr><th>0</th><td>0</td><td>1.4</td><td>0</td><td>2.4</td></tr>
        <tr><th>1</th><td>1</td><td>1.4</td><td>-0.784</td><td>2.4</td></tr>
        <tr><th>2</th><td>2</td><td>0.784</td><td>-1.4</td><td>2.4</td></tr>
        <tr><th>3</th><td>3</td><td>0</td><td>-1.4</td><td>2.4</td></tr>
        <tr><th>4</th><td>4</td><td>1.3375</td><td>0</td><td>2.53125</td></tr>
        <tr><th>5</th><td>5</td><td>1.3375</td><td>-0.749</td><td>2.53125</td></tr>
        <tr><th>6</th><td>6</td><td>0.749</td><td>-1.3375</td><td>2.53125</td></tr>
        <tr><th>7</th><td>7</td><td>0</td><td>-1.3375</td><td>2.53125</td></tr>
        <tr><th></th><td></td><td></td><td></td><td></td></tr>
        </tbody></table></div>
        <div class="vs"><b class="au"></b><i class="thumb"></i><i class="fill"></i><b class="ad"></b></div>
      </div>
    </div>
    <div class="col">
      <div class="vhead"><span class="vname">SpreadSheetView1</span>
        <div class="vbtns"><div><svg><use href="#s-h"/></svg></div><div><svg><use href="#s-v"/></svg></div><div><svg><use href="#s-max"/></svg></div><div><svg class="cx"><use href="#s-x"/></svg></div></div></div>
      <div class="sbar"><b class="l1">Showing</b><div class="combo c120">TableToPoints1<i class="tri"></i></div><b class="l2">Attribute:</b><div class="combo c99">Point Data<i class="tri"></i></div><b class="l3">Precision:</b><div class="spin"><b>6</b><svg viewBox="0 0 15 24"><path d="M3 10h9L7.500 5zM3 15h9l-4.500 5z"/></svg></div><div class="sb"><svg><use href="#s-dec"/><text x="3" y="13" class="dec">.10</text></svg></div><div class="sb"><svg><use href="#s-sel"/></svg></div><div class="sb"><svg><use href="#s-col"/></svg></div><div class="sb"><svg><use href="#s-br"/><text x="2" y="17" class="br">{</text><text x="15" y="17" class="br">}</text></svg></div><div class="sb"><svg><use href="#s-exp"/></svg></div></div>
      <div class="sheet">
        <div class="clip"><table class="t1"><colgroup><col class="k58"><col class="k61"><col class="k48"><col class="k48"><col class="k48"><col class="k130"></colgroup>
        <thead><tr><th class="nb"></th><th>Point ID</th><th colspan="3">Points</th><th class="nb">Points_Magnitude</th></tr></thead>
        <tbody>
        <tr><th>0</th><td>0</td><td>1.4</td><td>0</td><td>2.4</td><td>2.77849</td></tr>
        <tr><th>1</th><td>1</td><td>1.39</td><td>0</td><td>2.44</td><td>2.80815</td></tr>
        <tr><th>2</th><td>2</td><td>1.38</td><td>0</td><td>2.46</td><td>2.82064</td></tr>
        <tr><th>3</th><td>3</td><td>1.38</td><td>0</td><td>2.48</td><td>2.8381</td></tr>
        <tr><th>4</th><td>4</td><td>1.39</td><td>0</td><td>2.49</td><td>2.8517</td></tr>
        <tr><th>5</th><td>5</td><td>1.4</td><td>0</td><td>2.5</td><td>2.86531</td></tr>
        <tr><th>6</th><td>6</td><td>1.42</td><td>0</td><td>2.49</td><td>2.86644</td></tr>
        <tr><th>7</th><td>7</td><td>1.44</td><td>0</td><td>2.48</td><td>2.86775</td></tr>
        <tr><th>8</th><td>8</td><td>1.46</td><td>0</td><td>2.46</td><td>2.86063</td></tr>
        <tr><th>9</th><td>9</td><td>1.48</td><td>0</td><td>2.44</td><td>2.85377</td></tr>
        <tr><th>10</th><td>10</td><td>1.5</td><td>0</td><td>2.4</td><td>2.83019</td></tr>
        <tr><th>11</th><td>11</td><td>1.4</td><td>0</td><td>2.4</td><td>2.77849</td></tr>
        <tr><th>12</th><td>12</td><td>1.39</td><td>0</td><td>2.44</td><td>2.80815</td></tr>
        <tr><th>13</th><td>13</td><td>1.38</td><td>0</td><td>2.46</td><td>2.82064</td></tr>
        <tr><th>14</th><td>14</td><td>1.38</td><td>0</td><td>2.48</td><td>2.8381</td></tr>
        <tr><th>15</th><td>15</td><td>1.39</td><td>0</td><td>2.49</td><td>2.8517</td></tr>
        <tr><th>16</th><td>16</td><td>1.4</td><td>0</td><td>2.5</td><td>2.86531</td></tr>
        <tr><th>17</th><td>17</td><td>1.42</td><td>0</td><td>2.49</td><td>2.86644</td></tr>
        <tr><th>18</th><td>18</td><td>1.44</td><td>0</td><td>2.48</td><td>2.86775</td></tr>
        </tbody></table></div>
        <div class="vs"><b class="au"></b><i class="thumb"></i><i class="fill"></i><b class="ad"></b></div>
      </div>
    </div>
  </div>
</section>
</main>
<footer class="status"><div class="stop"><svg viewBox="0 0 10 10"><path d="M2 2l6 6M8 2 2 8" stroke="#888" stroke-width="3"/></svg></div><div class="progress"></div></footer>
</body>
</html>
```
FILE: styles.css
```css
* { box-sizing: border-box; }
body { margin: 0; width: 1920px; height: 1030px; overflow: hidden; background: #efefef; color: #000;
  font: 13px/16px "DejaVu Sans Condensed", "DejaVu Sans", sans-serif; font-stretch: condensed; letter-spacing: -0.2px; font-kerning: none;
  display: flex; flex-direction: column; }
svg { display: block; flex: none; }
i, b { font-style: normal; }
label { flex: none; }
.sprite { position: absolute; width: 0; height: 0; }

/* icon paint */
.ln { stroke: #6f6f60; stroke-width: 3.5; }
.lg { stroke: #a8a8a8; stroke-width: 3.5; }
.g { fill: #a3d185; stroke: #6f7a5c; stroke-width: 3.5; }
.y { fill: #f9c20d; stroke: #77704c; stroke-width: 3.5; }
.r { fill: #e5402c; stroke: #7a5a4c; stroke-width: 3.5; }
.gf { fill: #bdbdbd; stroke: #a2a2a2; stroke-width: 3; }
.o { fill: none; stroke: #6f7a5c; stroke-width: 14; }
.i { fill: none; stroke: #a8d88c; stroke-width: 8; }
.ax { font: bold 11.500px "Open Sans", sans-serif; fill: #8a8a86; letter-spacing: -.3px; }
.ax.sm { font-size: 11px; fill: #77776f; }
.let { font: italic bold 15px "Liberation Sans", sans-serif; fill: #222; }
.let.tiny { font-size: 10px; }
.td { font: bold 10.500px "Open Sans", sans-serif; fill: #6b6b58; letter-spacing: -.3px; }
.q { font: 14px "Liberation Sans", sans-serif; fill: #6b7058; }
.dec { font: 13px "DejaVu Sans", sans-serif; letter-spacing: -.5px; }
.br { font: 17px "DejaVu Sans", sans-serif; fill: #8c8c74; }
.help { font: bold 20px/24px "DejaVu Sans", sans-serif; color: #9fd080; -webkit-text-stroke: .7px #6f7a5c; }
.axl { font: 6px "DejaVu Sans", sans-serif; fill: #ddd; }

.titlebar { height: 29px; background: #fff; display: flex; align-items: center; padding-left: 3px; flex: none; }
.logo { width: 19px; height: 14px; }
.apptitle { font: 14.500px/20px "Open Sans", sans-serif; letter-spacing: -.35px; margin-left: 5px; flex: 1; }
.winctl { width: 150px; height: 28px; margin-right: 11px; }
.menu { height: 22px; border-bottom: 1px solid #d0d0d0; display: flex; align-items: center; gap: 16px; padding: 2px 0 0 11px; flex: none; }
.menu u { text-underline-offset: 2px; }

.toolbar { height: 45px; border-bottom: 1px solid #b4b4b4; background: linear-gradient(#fafafa, #ececec); display: flex; align-items: center; flex: none; }
.toolbar.wide { height: 44px; }
.ic { width: 38px; height: 44px; }
.wide .ic { margin-right: 1px; }
.ic.dis { filter: grayscale(1); opacity: .55; }
.grip { width: 15px; height: 17px; flex: none; padding: 0 4px 0 5px; background: repeating-linear-gradient(90deg, #aaa 0 1px, transparent 1px 2px) content-box; -webkit-mask: repeating-linear-gradient(#000 0 1px, transparent 1px 3px); mask: repeating-linear-gradient(#000 0 1px, transparent 1px 3px); }
.gw20 { width: 20px; padding: 0 7px 0 8px; }
.gw18 { width: 18px; padding: 0 6px 0 7px; }
.gw19, .gw19c { width: 19px; padding: 0 7px; }
.gw19 { width: 18px; }
.gw19b { width: 19px; padding: 0 7px; }
.sep { width: 7px; height: 26px; border-left: 1px solid #d4d4d4; margin-left: 3px; margin-right: -3px; flex: none; }
.time { width: 37px; margin-top: 3px; }
.field { background: #fff; border: 1px solid #b0b0b0; border-radius: 3px; display: flex; align-items: center; padding: 0 3px; }
.timefield { width: 108px; height: 26px; margin-right: 2px; padding-top: 1px; }
.spin { width: 46px; height: 26px; border: 1px solid #b0b0b0; border-radius: 3px; display: flex; background: #fff; overflow: hidden; flex: none; }
.spin b { flex: 1; font-weight: normal; text-align: right; padding-right: 6px; line-height: 25px; }
.spin svg { width: 17px; height: 24px; border-left: 1px solid #b8b8b8; background: linear-gradient(#fff, #eee); fill: #555; }
.spin.off { width: 39px; color: #bbb; background: #f2f2f2; margin-top: 1px; height: 25px; }
.spin.off svg { fill: #ddd; }

.combo { border: 1px solid #adadad; border-radius: 3px; background: linear-gradient(#fff, #efefef); display: flex; align-items: center; height: 24px; padding-left: 4px; flex: none; white-space: nowrap; }
.tri { margin-left: auto; margin-right: 10px; border: 5px solid transparent; border-top-color: #555; border-bottom: 0; }
.dot { width: 15px; height: 15px; border-radius: 50%; background: #c5823f; border: 1px solid #a09080; margin: 0 6px 0 4px; }
.solid { width: 150px; height: 28px; }
.blank { width: 75px; margin-left: 4px; border-color: #c8c8c8; }
.blank .tri { border-top-color: #ccc; }
.surf { width: 150px; }
.pressed { border: 1px solid #aaa; border-radius: 3px; background: #d9d9d9; width: 38px; height: 37px; display: flex; align-items: center; justify-content: center; overflow: hidden; }

.work { display: flex; flex: 1; min-height: 0; }
.dock { width: 301px; flex: none; }
.gutter { width: 7px; flex: none; }
.dtitle { height: 20px; padding: 1px 2px 0 4px; display: flex; justify-content: space-between; align-items: center; letter-spacing: -.1px; }
.dtitle span { display: flex; gap: 3px; }
.dtitle svg { width: 11px; height: 11px; }
.tree { height: 247px; border: 1px solid #b4b4b4; background: #fff; padding-top: 3px; }
.trow { height: 26px; display: flex; align-items: center; margin-left: -1px; }
.guide { width: 62px; height: 26px; }
.guide.eye { width: 38px; }
.gi { width: 16px; height: 16px; margin-right: 5px; margin-left: 1px; }
.cu { margin-left: -1px; margin-right: 7px; margin-top: -6px; }
.selected { background: #308cc6; border: 1px solid #2a7fb8; color: #fff; height: 22px; width: 138px; display: flex; align-items: center; padding-left: 23px; }
.split { height: 7px; background: radial-gradient(circle, #aaa 0 .7px, transparent 1px) 50% 50% / 3px 3px; margin: 0 143px; background-repeat: repeat-x; }
.tabs { display: flex; align-items: flex-end; height: 30px; border-bottom: 1px solid #b4b4b4; }
.tab { width: 95px; height: 28px; border: 1px solid #b4b4b4; border-left: 0; border-bottom: 0; border-radius: 0 3px 0 0; background: #dcdcdc; display: flex; align-items: center; justify-content: center; padding-top: 2px; }
.tab.on { width: 89px; height: 30px; border-left: 1px solid #b4b4b4; border-radius: 3px 3px 0 0; background: linear-gradient(#fff, #efefef); margin-bottom: -1px; }
.p2 { height: 22px; }
.btn { border: 1px solid #b0b0b0; border-radius: 3px; background: linear-gradient(#fff, #ececec); display: flex; align-items: center; justify-content: center; height: 27px; flex: none; }
.btn.off { color: #bbb; border-color: #c4c4c4; }
.w79 { width: 80px; }
.w32 { width: 33px; }
.btnrow { display: flex; gap: 2px; padding: 9px 0 0 11px; height: 36px; }
.btnrow.s { padding-top: 7px; height: 41px; gap: 3px; }
.bi { width: 16px; height: 16px; margin-right: 3px; }
.bi2 { width: 20px; height: 20px; margin-right: 1px; }
.bi3 { width: 16px; height: 16px; margin-right: 3px; }
.search { width: 248px; height: 26px; color: #808080; letter-spacing: -.1px; }
.gear { width: 28px; }
.gear svg { width: 17px; height: 18px; }
.scroller { margin: 0 0 0 11px; width: 279px; display: grid; grid-template-columns: 262px 17px; grid-template-rows: 390px 17px; }
.inner { overflow: hidden; white-space: nowrap; }
.sect, .prow, .colrow, .editrow, .rep, .opac { display: flex; }
.sect { height: 34px; gap: 5px; }
.shead { width: 191px; height: 27px; flex: none; border: 1px solid #b4b4b4; font-weight: bold; padding: 0 10px 0 34px; display: flex; align-items: center; background: linear-gradient(#2b93d1, #2b93d1) 13px 10px / 14px 5px no-repeat; letter-spacing: -.2px; }
.shead span { overflow: hidden; }
.cp { width: 33px; }
.cp svg { width: 31px; height: 27px; }
.cp.off svg { opacity: .8; }
.sect .cp + .cp { margin-left: -1px; }
.prow { height: 32px; }
.prow label { width: 59px; padding-top: 1px; }
.pcombo { width: 220px; height: 28px; flex: none; border: 1px solid #adadad; border-radius: 3px; background: linear-gradient(#fff, #efefef); display: flex; align-items: center; padding-left: 7px; }
.pcombo svg { width: 16px; height: 16px; margin-right: 5px; }
.check { height: 26px; display: flex; align-items: center; margin-top: -2px; }
.check.c2 { margin-top: 0; }
.check i { width: 17px; height: 17px; border: 1px solid #b4b4b4; background: #fff; margin-right: 6px; }
.sect.s2 { margin-top: 5px; }
.rep { height: 33px; }
.rep label { width: 108px; padding-top: 1px; }
.rep .pcombo { height: 24px; padding-left: 4px; }
.sub { font-weight: bold; height: 17px; border-bottom: 1px solid #a0a0a0; margin-bottom: 5px; letter-spacing: -.35px; box-shadow: 0 1px #fff; }
.colrow { height: 32px; align-items: center; gap: 5px; padding-bottom: 4px; }
.rest { width: 150px; border-color: #c8c8c8; }
.editrow { gap: 4px; height: 35px; }
.ei { width: 20px !important; height: 23px !important; margin-right: 2px; }
.cp .ei { width: 24px !important; height: 28px !important; margin: 0; filter: grayscale(1); opacity: .6 !important; }
.opac { height: 27px; }
.opac label { width: 109px; padding-top: 2px; }
.opac .field { width: 60px; height: 26px; flex: none; margin: 1px 0 0 8px; }
.slider { width: 110px; height: 6px; border: 1px solid #1f6fa4; background: #3ba0e0; border-radius: 2px; margin-top: 11px; display: flex; justify-content: flex-end; align-items: center; flex: none; }
.slider i { width: 16px; height: 16px; border: 1px solid #aaa; border-radius: 3px; background: #fff; flex: none; }
.vs { width: 17px; border-left: 1px solid #b4b4b4; display: flex; flex-direction: column; background: #e4e4e4; }
.vs b, .hs b { width: 16px; height: 17px; background: #fafafa; display: flex; align-items: center; justify-content: center; flex: none; }
.vs b::before, .hs b::before { content: ""; border: 5px solid transparent; }
.au::before { border-bottom-color: #555 !important; border-top: 0 !important; }
.ad::before { border-top-color: #555 !important; border-bottom: 0 !important; }
.al::before { border-right-color: #555 !important; border-left: 0 !important; }
.arr::before { border-left-color: #555 !important; border-right: 0 !important; }
.vs .thumb { height: 34px; flex: none; border: solid #b4b4b4; border-width: 1px 0; background: linear-gradient(90deg, #fff, #f0f0f0); }
.vs .fill, .hs .fill { flex: 1; }
.vs .ad { border-top: 1px solid #b4b4b4; }
.scroller .vs .thumb { height: 155px; }
.hs { height: 17px; border-top: 1px solid #b4b4b4; border-right: 1px solid #b4b4b4; display: flex; background: #e4e4e4; }
.hs .thumb { width: 178px; border: solid #b4b4b4; border-width: 0 1px; background: linear-gradient(#fff, #f0f0f0); }
.hs .arr { border-left: 1px solid #b4b4b4; }

.center { flex: 1; min-width: 0; display: flex; flex-direction: column; }
.ltabs { height: 30px; display: flex; align-items: flex-end; flex: none; }
.ltab { height: 27px; width: 37px; border: 1px solid #b4b4b4; border-left: 0; border-bottom: 0; border-radius: 0 3px 0 0; display: flex; align-items: center; justify-content: center; background: #e6e6e6; padding-top: 4px; }
.ltab.on { width: 123px; height: 28px; border-left: 1px solid #b4b4b4; border-radius: 3px 3px 0 0; background: linear-gradient(#fff, #fafafa); justify-content: flex-start; padding: 3px 0 0 14px; letter-spacing: -.15px; }
.li { width: 16px; height: 16px; margin-right: 4px; }
.lx { width: 12px; height: 12px; margin-left: 3px; margin-top: -2px; }
.plus { font-size: 14px; }
.pane { border: solid #b0b0b0; border-width: 1px 0 1px 1px; height: 790px; display: flex; gap: 4px; padding: 1px 0 0 1px; }
.col { width: 802px; display: flex; flex-direction: column; }
.vhead { height: 26px; display: flex; justify-content: flex-end; align-items: center; flex: none; }
.h2 { margin-top: 4px; }
.vtools { display: flex; align-items: center; margin-right: auto; }
.vtools svg { width: 26px; height: 26px; }
.vtools i { width: 7px; height: 14px; border-left: 1px solid #d0d0d0; margin-left: 3px; margin-right: -3px; }
.more { width: 12px; height: 9px; }
.vname { margin-right: 11px; letter-spacing: -.05px; }
.vname.act { font-weight: bold; text-decoration: underline; letter-spacing: -.1px; }
.vbtns { display: flex; gap: 1px; }
.vbtns div { width: 26px; height: 26px; border: 1px solid #b0b0b0; border-radius: 3px; background: linear-gradient(#fff, #efefef); display: flex; align-items: center; justify-content: center; }
.vbtns svg { width: 26px; height: 26px; }
.vbtns .cx { width: 11px; height: 11px; }
.render { height: 366px; border: 2px solid #00f; padding: 1px; background: #e8e8f0; flex: none; }
.render svg { width: 796px; height: 360px; background: #52576e; }

.sbar { display: flex; align-items: center; height: 27px; margin: 3px 0 2px 3px; flex: none; white-space: nowrap; }
.sbar > b { letter-spacing: -.25px; flex: none; }
.l1 { width: 59px; }
.l2 { width: 68px; padding-left: 1px; }
.l3 { width: 65px; padding-left: 1px; }
.c120 { width: 120px; }
.c99 { width: 99px; }
.sbar .spin { margin-right: 1px; }
.sb { width: 28px; height: 27px; border: 1px solid #b0b0b0; border-radius: 3px; background: linear-gradient(#fff, #ececec); display: flex; align-items: center; justify-content: center; margin-right: 1px; flex: none; }
.sb svg { width: 28px; height: 27px; }
.sheet { flex: 1; min-height: 0; width: 796px; margin: 0 3px 3px; border: 1px solid #b4b4b4; background: #fff; display: flex; font: 14px/18px "Open Sans", sans-serif; letter-spacing: -.25px; }
.clip { flex: 1; overflow: hidden; background: linear-gradient(#efefef, #efefef) 0 0 / 100% 24px no-repeat; }
table { border-collapse: separate; border-spacing: 0; table-layout: fixed; }
.t1 { width: 393px; }
.t2 { width: 256px; }
.k31 { width: 31px; } .k55 { width: 55px; } .k56 { width: 56px; } .k58 { width: 58px; }
.k61 { width: 61px; } .k48 { width: 48px; } .k130 { width: 130px; }
th { font-weight: normal; padding: 0; }
thead th { height: 24px; background: linear-gradient(#fafafa, #ebebeb); border-bottom: 1px solid #a8a8a8; border-right: 1px solid #ccc; letter-spacing: .03px; white-space: nowrap; padding-top: 1px; }
thead th.nb { border-right: 0; }
tbody th, td { height: 37px; text-align: left; border-right: 1px solid #c0c0c0; border-bottom: 1px solid #c0c0c0; padding: 1px 0 0 3px; white-space: nowrap; }
tbody th { background: linear-gradient(#fafafa, #e9e9e9); border-color: #aaa; padding: 3px 0 0 2px; }
tbody tr:nth-child(even) td { background: #f7f7f7; }

.status { height: 25px; display: flex; padding: 4px 2px 3px 961px; gap: 2px; flex: none; }
.stop { width: 20px; border: 1px solid #b8b8b8; border-radius: 3px; background: #f4f4f4; display: flex; align-items: center; justify-content: center; }
.stop svg { width: 9px; height: 9px; }
.progress { flex: 1; border: 1px solid #a0a0a0; border-right-color: #fff; border-bottom-color: #fff; }
```
